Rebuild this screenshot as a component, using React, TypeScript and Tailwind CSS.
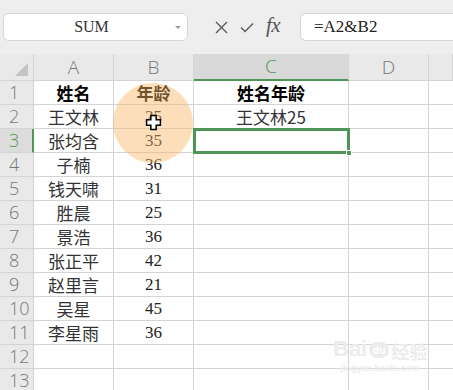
const rows: [string, string, string][] = [
  ["姓名", "年龄", "姓名年龄"],
  ["王文林", "25", "王文林25"],
  ["张均含", "35", ""],
  ["子楠", "36", ""],
  ["钱天啸", "31", ""],
  ["胜晨", "25", ""],
  ["景浩", "36", ""],
  ["张正平", "42", ""],
  ["赵里言", "21", ""],
  ["吴星", "45", ""],
  ["李星雨", "36", ""],
  ["", "", ""],
  ["", "", ""],
];

const cjk = { fontFamily: '"Noto Sans CJK SC", sans-serif' };
const serif = { fontFamily: '"Liberation Serif", "Noto Sans CJK SC", serif' };

export default function App() {
  return (
    <div className="relative w-[453px] h-[390px] overflow-hidden bg-white">
      {/* formula bar */}
      <div className="h-[54px] bg-[#eeeeee] flex items-center pl-[3px] gap-0">
        <div className="w-[185px] h-[28px] bg-white rounded-md border border-[#d6d6d6] flex items-center relative">
          <span className="flex-1 text-center text-[16px] text-[#333] pr-2" style={serif}>SUM</span>
          <span className="absolute right-[6px] top-[12px] w-0 h-0 border-l-[3px] border-r-[3px] border-t-[3px] border-l-transparent border-r-transparent border-t-[#999]"></span>
        </div>
        <div className="w-[112px] flex items-center pl-[27px] gap-[12px] text-[#555]">
          <svg width="13" height="13" viewBox="0 0 13 13"><path d="M1 1 L12 12 M12 1 L1 12" stroke="#555" strokeWidth="1.3" fill="none" /></svg>
          <svg width="14" height="11" viewBox="0 0 14 11"><path d="M1 5.5 L5 9.5 L13 1.5" stroke="#555" strokeWidth="1.3" fill="none" /></svg>
          <span className="italic text-[21px] leading-none -mt-1 tracking-tight" style={serif}>fx</span>
        </div>
        <div className="flex-1 h-[28px] bg-white rounded-l-md border border-r-0 border-[#d6d6d6] flex items-center pl-[13px]">
          <span className="text-[17px] text-[#222]" style={serif}>=A2&amp;B2</span>
        </div>
      </div>

      {/* grid */}
      <div className="grid grid-cols-[34px_80px_80px_155px_80px_1fr] auto-rows-[24px] grid-rows-[27px]">
        <div className="bg-[#e9e9e9] border-r border-b border-[#d4d4d4] relative">
          <svg className="absolute left-[15px] top-[9px]" width="13" height="13" viewBox="0 0 13 13"><path d="M13 0 L13 13 L0 13 Z" fill="#c4c4c4" /></svg>
        </div>
        {["A", "B", "C", "D", ""].map((c) => (
          <div
            key={c}
            className={
              c === "C"
                ? "bg-[#d9d9d9] border-r border-b-2 border-r-[#d4d4d4] border-b-[#4f9556] flex items-center justify-center text-[19px] text-[#4f9556] font-light"
                : "bg-[#e9e9e9] border-r border-b border-[#d4d4d4] flex items-center justify-center text-[19px] text-[#777] font-light"
            }
            style={{ fontFamily: '"Open Sans", sans-serif' }}
          >
            {c}
          </div>
        ))}
        {rows.map((r, i) => {
          const n = i + 1;
          const hdr = i === 0;
          return [
            <div
              key={"h" + n}
              className={
                n === 3
                  ? "bg-[#dcdcdc] border-r-2 border-b border-r-[#4f9556] border-b-[#d4d4d4] flex items-center pl-[9px] text-[18px] text-[#4f9556] font-light"
                  : "bg-[#e9e9e9] border-r border-b border-[#d4d4d4] flex items-center pl-[9px] text-[18px] text-[#777] font-light"
              }
              style={{ fontFamily: '"Open Sans", sans-serif' }}
            >
              {n}
            </div>,
            <div key={"a" + n} className={"border-r border-b border-[#d4d4d4] flex items-center justify-center text-[17px] " + (hdr ? "font-bold text-black" : "text-[#333]")} style={cjk}>
              {r[0]}
            </div>,
            <div key={"b" + n} className={"border-r border-b border-[#d4d4d4] flex items-center justify-center text-[17px] " + (hdr ? "font-bold text-black" : "text-[#222]")} style={hdr ? cjk : serif}>
              {r[1]}
            </div>,
            <div key={"c" + n} className={"border-r border-b border-[#d4d4d4] flex items-center justify-center text-[17px] " + (hdr ? "font-bold text-black" : "text-[#333]")} style={cjk}>
              {r[2]}
            </div>,
            <div key={"d" + n} className="border-r border-b border-[#d4d4d4]"></div>,
            <div key={"e" + n} className="border-b border-[#d4d4d4]"></div>,
          ];
        })}
      </div>

      {/* selected cell C3 */}
      <div className="absolute left-[193px] top-[128px] w-[157px] h-[26px] border-[3px] border-[#4f9556]"></div>
      <div className="absolute left-[346px] top-[150px] w-[6px] h-[6px] bg-[#4f9556] border border-white"></div>

      {/* click highlight */}
      <div className="absolute left-[113px] top-[83px] w-[80px] h-[80px] rounded-full bg-[#f8b865]/45"></div>
      <svg className="absolute left-[145px] top-[114px]" width="17" height="17" viewBox="0 0 16 16">
        <path d="M5.5 1.5 H10.5 V5.5 H14.5 V10.5 H10.5 V14.5 H5.5 V10.5 H1.5 V5.5 H5.5 Z" fill="#fff" stroke="#000" strokeWidth="1.4" />
      </svg>

      {/* watermark */}
      <div className="absolute left-[333px] top-[338px] flex flex-col items-center text-[#ececec] leading-none">
        <div className="flex items-end gap-[2px]">
          <span className="text-[22px] font-bold" style={{ fontFamily: '"Liberation Sans", sans-serif' }}>Bai</span>
          <span className="w-[20px] h-[16px] rounded-full bg-[#ececec] text-white text-[10px] font-bold flex items-center justify-center mb-[2px]">du</span>
          <span className="text-[18px] font-bold" style={cjk}>经验</span>
        </div>
        <span className="text-[9px] mt-[4px] font-bold" style={{ fontFamily: '"Liberation Sans", sans-serif' }}>jingyan.baidu.com</span>
      </div>
    </div>
  );
}
